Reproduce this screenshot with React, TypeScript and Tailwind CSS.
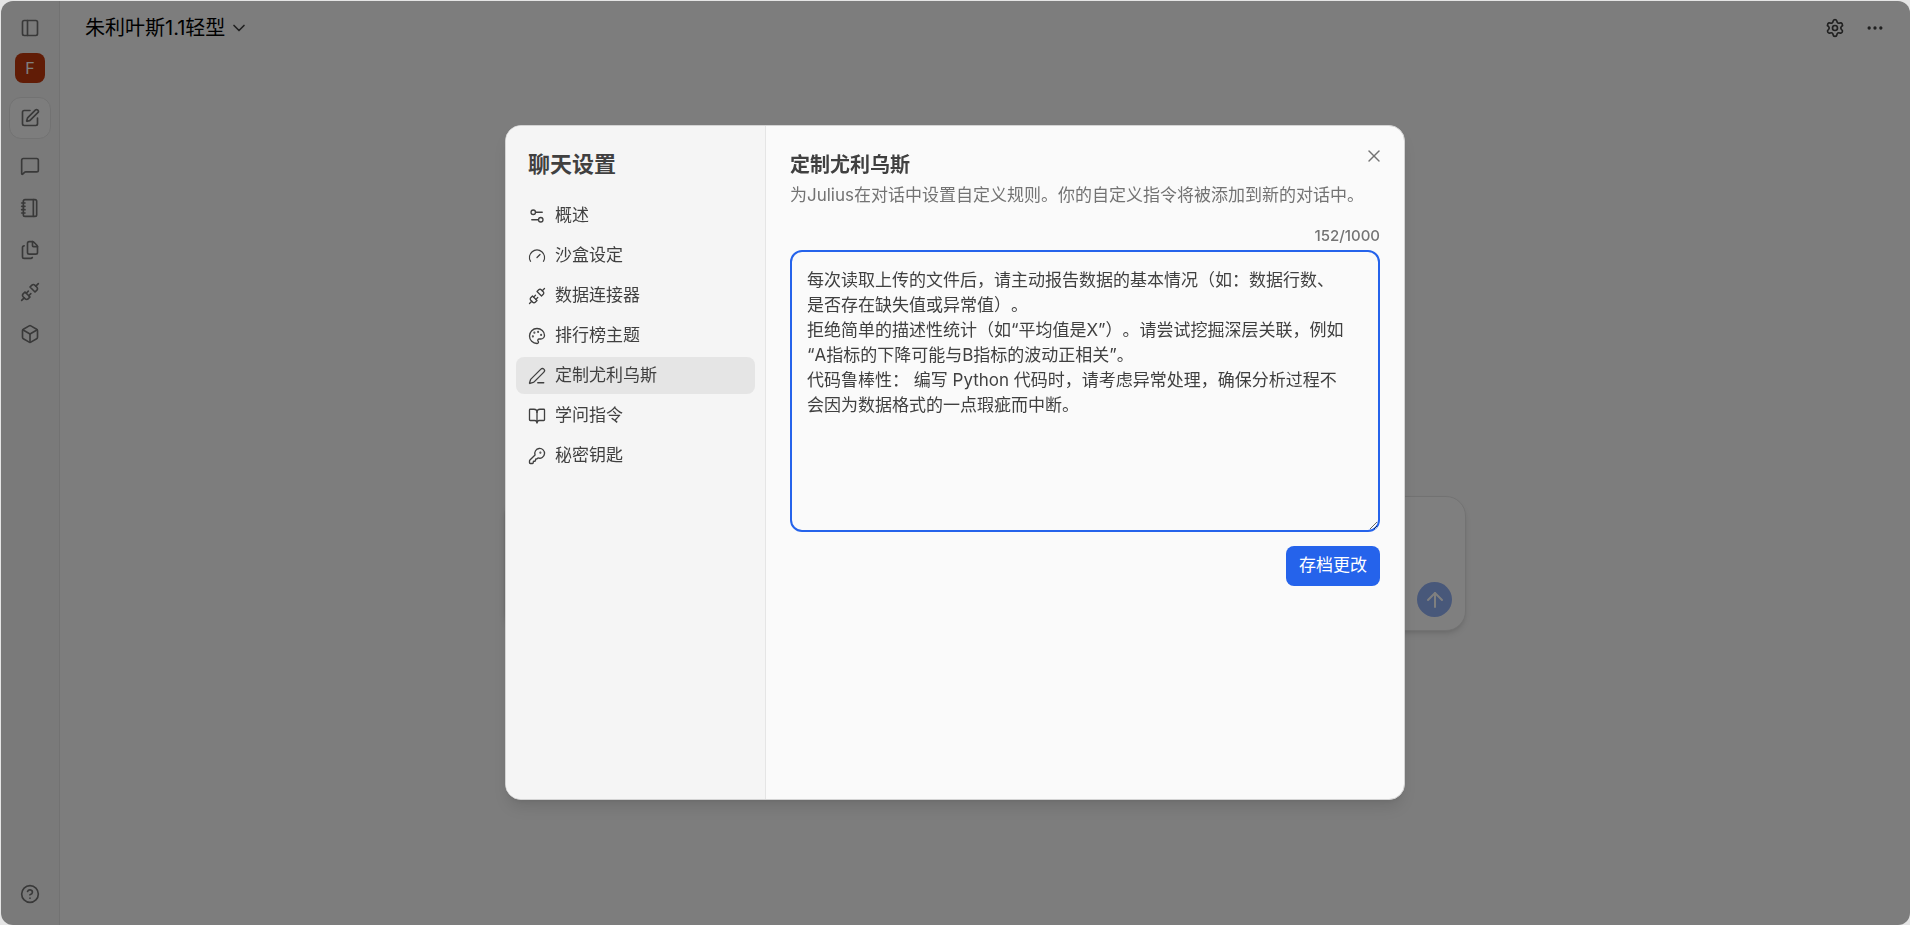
import React, { useEffect, useRef, useState } from 'react';
import {
  ArrowUp,
  BookOpen,
  Box,
  ChevronDown,
  CircleQuestionMark,
  Ellipsis,
  Files,
  Gauge,
  KeyRound,
  LucideIcon,
  MessageSquare,
  Notebook,
  Palette,
  PanelLeft,
  PenLine,
  Settings,
  Settings2,
  SquarePen,
  Unplug,
  X,
} from 'lucide-react';
import clsx from 'clsx';

const MAX_LENGTH = 1000;
const SAVED_LENGTH = 152;

// zero-width space lets the line break before the opening quote
const DEFAULT_RULES = [
  '每次读取上传的文件后，请主动报告数据的基本情况（如：数据行数、是否存在缺失值或异常值）。',
  '拒绝简单的描述性统计（如“平均值是X”）。请尝试挖掘深层关联，例如\u200b“A指标的下降可能与B指标的波动正相关”。',
  '代码鲁棒性： 编写 Python 代码时，请考虑异常处理，确保分析过程不会因为数据格式的一点瑕疵而中断。',
].join('\n');

interface NavItem {
  id: string;
  label: string;
  icon: LucideIcon;
}

const railItems: NavItem[] = [
  { id: 'chats', label: '对话', icon: MessageSquare },
  { id: 'notebooks', label: '笔记本', icon: Notebook },
  { id: 'files', label: '文件', icon: Files },
  { id: 'connectors', label: '连接器', icon: Unplug },
  { id: 'models', label: '模型', icon: Box },
];

const settingsItems: NavItem[] = [
  { id: 'overview', label: '概述', icon: Settings2 },
  { id: 'sandbox', label: '沙盒设定', icon: Gauge },
  { id: 'connectors', label: '数据连接器', icon: Unplug },
  { id: 'theme', label: '排行榜主题', icon: Palette },
  { id: 'customize', label: '定制尤利乌斯', icon: PenLine },
  { id: 'learned', label: '学问指令', icon: BookOpen },
  { id: 'secrets', label: '秘密钥匙', icon: KeyRound },
];

function Rail() {
  return (
    <aside className="flex w-[59px] shrink-0 flex-col items-center border-r border-neutral-200 bg-neutral-100 pt-[17px] pb-[10px] text-neutral-500">
      <button aria-label="侧边栏" className="flex h-5 w-5 items-center justify-center">
        <PanelLeft size={20} strokeWidth={2} />
      </button>
      <button className="mt-[15px] flex h-[30px] w-[30px] items-center justify-center rounded-lg bg-[#c2380c] text-base text-white">
        F
      </button>
      <button
        aria-label="新对话"
        className="mt-[14px] mb-[6px] flex h-[42px] w-[42px] items-center justify-center rounded-xl border border-neutral-200 bg-neutral-50"
      >
        <SquarePen size={20} strokeWidth={2} />
      </button>
      {railItems.map(({ id, label, icon: Icon }) => (
        <button key={id} aria-label={label} className="flex h-[42px] w-[42px] items-center justify-center">
          <Icon size={20} strokeWidth={2} />
        </button>
      ))}
      <button aria-label="帮助" className="mt-auto flex h-[42px] w-[42px] items-center justify-center">
        <CircleQuestionMark size={20} strokeWidth={2} />
      </button>
    </aside>
  );
}

function Workspace() {
  return (
    <main className="flex min-w-0 flex-1 flex-col bg-neutral-50">
      <header className="flex h-[54px] items-center justify-between pr-[25px] pl-[25px]">
        <button className="flex items-center gap-1 text-xl text-black">
          朱利叶斯1.1轻型
          <ChevronDown size={20} strokeWidth={2} className="text-neutral-700" />
        </button>
        <div className="flex items-center gap-5 text-neutral-700">
          <button aria-label="设置">
            <Settings size={20} strokeWidth={2} />
          </button>
          <button aria-label="更多">
            <Ellipsis size={20} strokeWidth={2} />
          </button>
        </div>
      </header>
      <div className="flex flex-1 items-center justify-center pt-[147px]">
        <div className="flex h-[135px] w-full max-w-[962px] items-end justify-end rounded-[20px] border border-neutral-200 bg-white p-[13px] shadow-md">
          <button
            aria-label="发送"
            className="flex h-[35px] w-[35px] items-center justify-center rounded-full bg-[#2563eb] text-white opacity-50"
          >
            <ArrowUp size={24} strokeWidth={2} />
          </button>
        </div>
      </div>
    </main>
  );
}

function SettingsDialog() {
  const [active, setActive] = useState('customize');
  const [rules, setRules] = useState(DEFAULT_RULES);
  const textareaRef = useRef<HTMLTextAreaElement>(null);

  useEffect(() => {
    const el = textareaRef.current;
    if (!el) return;
    const caret = DEFAULT_RULES.lastIndexOf('\n') + 1;
    el.focus();
    el.setSelectionRange(caret, caret);
  }, []);

  const count = rules === DEFAULT_RULES ? SAVED_LENGTH : rules.length;

  return (
    <div
      role="dialog"
      aria-labelledby="settings-title"
      className="relative flex min-h-[675px] w-full max-w-[900px] overflow-hidden rounded-2xl border border-neutral-300 bg-neutral-50 text-neutral-700 shadow-lg"
    >
      <nav className="w-[260px] shrink-0 border-r border-neutral-200 bg-neutral-100 px-[10px] pt-[23px]">
        <h2 id="settings-title" className="px-3 text-[22px] leading-[30px] font-bold">
          聊天设置
        </h2>
        <ul className="mt-[18px] flex flex-col gap-[3px]">
          {settingsItems.map(({ id, label, icon: Icon }) => (
            <li key={id}>
              <button
                onClick={() => setActive(id)}
                className={clsx(
                  'flex h-[37px] w-full items-center gap-[9px] rounded-lg px-3 text-[17px]',
                  active === id && 'bg-neutral-200'
                )}
              >
                <Icon size={18} strokeWidth={1.75} />
                {label}
              </button>
            </li>
          ))}
        </ul>
      </nav>

      <section className="flex min-w-0 flex-1 flex-col px-6 pt-6">
        <h3 className="text-xl leading-[30px] font-bold">定制尤利乌斯</h3>
        <label htmlFor="rules" className="mt-[3px] text-[17px] leading-6 text-neutral-500">
          为Julius在对话中设置自定义规则。你的自定义指令将被添加到新的对话中。
        </label>
        <div className="mt-[17px] text-right text-[15px] leading-6 font-medium text-neutral-500">
          {count}/{MAX_LENGTH}
        </div>
        <textarea
          id="rules"
          ref={textareaRef}
          value={rules}
          maxLength={MAX_LENGTH}
          spellCheck={false}
          onChange={(e) => setRules(e.target.value)}
          className="mt-[2px] h-[282px] w-full resize rounded-xl border-2 border-[#2563eb] bg-transparent py-4 pr-8 pl-[15px] text-[17px] leading-[25px] outline-none [text-spacing-trim:space-all]"
        />
        <button className="mt-[14px] h-10 self-end rounded-lg bg-[#2563eb] px-[13px] text-[17px] text-white">
          存档更改
        </button>
      </section>

      <button aria-label="关闭" className="absolute top-5 right-5 text-neutral-500">
        <X size={20} strokeWidth={1.75} />
      </button>
    </div>
  );
}

export default function App() {
  return (
    <div
      lang="zh-CN"
      className="flex min-h-screen flex-col bg-neutral-200 pt-px pl-px font-['Inter','Noto_Sans_CJK_SC',sans-serif]"
    >
      <div className="relative flex flex-1 overflow-hidden rounded-xl">
        <Rail />
        <Workspace />
        <div className="absolute inset-0 bg-black/50" />
      </div>
      <div className="fixed inset-0 flex items-center justify-center">
        <SettingsDialog />
      </div>
    </div>
  );
}
